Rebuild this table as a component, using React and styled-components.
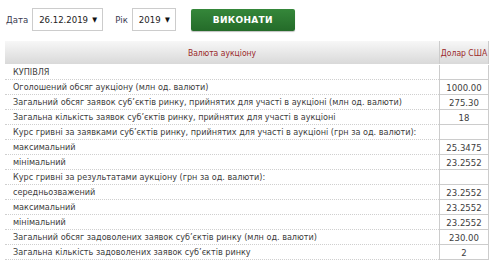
import styled, { createGlobalStyle } from 'styled-components';

const GlobalStyle = createGlobalStyle`
	html, body {
		margin: 0;
		padding: 0;
		background: #fff;
	}
	body {
		font-family: "DejaVu Sans Condensed", "DejaVu Sans", sans-serif;
		color: #3c3c3c;
	}
`;

const Page = styled.div`
	width: 499px;
	height: 268px;
	overflow: hidden;
`;

const Toolbar = styled.div`
	display: flex;
	align-items: center;
	height: 23px;
	padding: 8px 0 0 6px;
`;

const Label = styled.span`
	font-size: 9.5px;
	color: #3a3a50;
	margin-right: 4px;
`;

const Select = styled.div`
	display: flex;
	align-items: center;
	justify-content: space-between;
	box-sizing: border-box;
	width: ${({ $width }) => $width}px;
	height: 23px;
	padding: 0 5px 0 6px;
	margin-right: ${({ $gap }) => $gap}px;
	border: 1px solid #ccc;
	background: #fff;
	font-size: 9.5px;
	color: #222;

	& .arrow {
		font-size: 7px;
		color: #111;
	}
`;

const RunButton = styled.button`
	width: 104px;
	height: 22px;
	border: none;
	border-radius: 2px;
	background: linear-gradient(#35873a, #246b29);
	box-shadow: 0 1px 1px rgba(0, 0, 0, 0.25);
	color: #fff;
	font-family: "DejaVu Sans", sans-serif;
	font-weight: bold;
	font-size: 9px;
	letter-spacing: 0.3px;
	cursor: pointer;
`;

const Table = styled.table`
	margin: 10px 0 0 5px;
	width: 484px;
	table-layout: fixed;
	border-collapse: collapse;
	font-size: 9px;
`;

const HeadCell = styled.th`
	height: 23px;
	padding: 0;
	font-weight: normal;
	font-size: 8.5px;
	white-space: nowrap;
	color: #9b2b2b;
	background: linear-gradient(#f7f7f7, #d9d9d9);
	border-left: ${({ $value }) => ($value ? '1px solid #ccc' : 'none')};
	border-right: ${({ $value }) => ($value ? '1px solid #ccc' : 'none')};
	border-bottom: 1px solid #fff;
`;

const LabelCell = styled.td`
	height: 14px;
	padding: 0 0 0 8px;
	border-bottom: 1px dotted #cfcfcf;
	white-space: nowrap;
	overflow: hidden;
`;

const ValueCell = styled.td`
	padding: 0;
	text-align: center;
	font-size: 9.5px;
	border: 1px solid #ccc;
	white-space: nowrap;
`;

const rows = [
	['КУПІВЛЯ', ''],
	['Оголошений обсяг аукціону (млн од. валюти)', '1000.00'],
	['Загальний обсяг заявок суб\u2019єктів ринку, прийнятих для участі в аукціоні (млн од. валюти)', '275.30'],
	['Загальна кількість заявок суб\u2019єктів ринку, прийнятих для участі в аукціоні', '18'],
	['Курс гривні за заявками суб\u2019єктів ринку, прийнятих для участі в аукціоні (грн за од. валюти):', ''],
	['максимальний', '25.3475'],
	['мінімальний', '23.2552'],
	['Курс гривні за результатами аукціону (грн за од. валюти):', ''],
	['середньозважений', '23.2552'],
	['максимальний', '23.2552'],
	['мінімальний', '23.2552'],
	['Загальний обсяг задоволених заявок суб\u2019єктів ринку (млн од. валюти)', '230.00'],
	['Загальна кількість задоволених заявок суб\u2019єктів ринку', '2'],
];

export default function App() {
	return (
		<Page>
			<GlobalStyle />
			<Toolbar>
				<Label>Дата</Label>
				<Select $width={71} $gap={12}>
					<span>26.12.2019</span>
					<span className="arrow">▼</span>
				</Select>
				<Label>Рік</Label>
				<Select $width={44} $gap={15}>
					<span>2019</span>
					<span className="arrow">▼</span>
				</Select>
				<RunButton>ВИКОНАТИ</RunButton>
			</Toolbar>
			<Table>
				<colgroup>
					<col />
					<col style={{ width: '49px' }} />
				</colgroup>
				<thead>
					<tr>
						<HeadCell>Валюта аукціону</HeadCell>
						<HeadCell $value>Долар США</HeadCell>
					</tr>
				</thead>
				<tbody>
					{rows.map(([label, value], i) => (
						<tr key={i}>
							<LabelCell>{label}</LabelCell>
							<ValueCell>{value}</ValueCell>
						</tr>
					))}
				</tbody>
			</Table>
		</Page>
	);
}
